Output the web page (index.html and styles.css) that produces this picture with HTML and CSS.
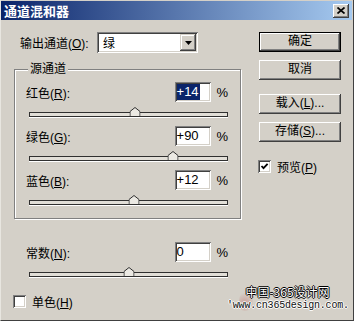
FILE: index.html
```html
<!DOCTYPE html>
<html lang="zh-CN">
<head>
    <meta charset="UTF-8">
    <title>通道混和器</title>
    <link rel="stylesheet" href="styles.css">
</head>
<body>
    <div class="window">
        <div class="titlebar">
            <span class="title">通道混和器</span>
            <span class="close">
                <svg width="8" height="7" viewBox="0 0 8 7"><path d="M0.5 0.5L7.5 6.5M7.5 0.5L0.5 6.5" stroke="#000" stroke-width="1.7"/></svg>
            </span>
        </div>

        <div class="content">
            <div class="main">
                <div class="output-row">
                    <label>输出通道(<u>O</u>):</label>
                    <div class="select">
                        <span>绿</span>
                        <span class="select-arrow">
                            <svg width="7" height="4" viewBox="0 0 7 4"><path d="M0 0H7L3.5 4Z" fill="#000"/></svg>
                        </span>
                    </div>
                </div>

                <div class="group">
                    <div class="group-title">源通道</div>

                    <div class="channel">
                        <div class="channel-row">
                            <label>红色(<u>R</u>):</label>
                            <div class="num"><span class="sel">+14</span></div>
                            <span class="pct">%</span>
                        </div>
                        <div class="track">
                            <svg class="thumb" style="left: 53.5%" width="11" height="10" viewBox="0 0 11 10"><path d="M0.5 9.5V4.5L5.5 0.5L10.5 4.5V9.5Z" fill="#ebe9e3" stroke="#303030"/></svg>
                        </div>
                    </div>

                    <div class="channel">
                        <div class="channel-row">
                            <label>绿色(<u>G</u>):</label>
                            <div class="num">+90</div>
                            <span class="pct">%</span>
                        </div>
                        <div class="track">
                            <svg class="thumb" style="left: 72.5%" width="11" height="10" viewBox="0 0 11 10"><path d="M0.5 9.5V4.5L5.5 0.5L10.5 4.5V9.5Z" fill="#ebe9e3" stroke="#303030"/></svg>
                        </div>
                    </div>

                    <div class="channel">
                        <div class="channel-row">
                            <label>蓝色(<u>B</u>):</label>
                            <div class="num">+12</div>
                            <span class="pct">%</span>
                        </div>
                        <div class="track">
                            <svg class="thumb" style="left: 53%" width="11" height="10" viewBox="0 0 11 10"><path d="M0.5 9.5V4.5L5.5 0.5L10.5 4.5V9.5Z" fill="#ebe9e3" stroke="#303030"/></svg>
                        </div>
                    </div>
                </div>

                <div class="channel const">
                    <div class="channel-row">
                        <label>常数(<u>N</u>):</label>
                        <div class="num">0</div>
                        <span class="pct">%</span>
                    </div>
                    <div class="track">
                        <svg class="thumb" style="left: 50%" width="11" height="10" viewBox="0 0 11 10"><path d="M0.5 9.5V4.5L5.5 0.5L10.5 4.5V9.5Z" fill="#ebe9e3" stroke="#303030"/></svg>
                    </div>
                </div>

                <div class="check mono">
                    <span class="box"></span>
                    <span>单色(<u>H</u>)</span>
                </div>
            </div>

            <div class="side">
                <div class="btn default">确定</div>
                <div class="btn">取消</div>
                <div class="btn spaced">载入(<u>L</u>)...</div>
                <div class="btn">存储(<u>S</u>)...</div>
                <div class="check preview">
                    <span class="box">
                        <svg width="9" height="9" viewBox="0 0 9 9"><path d="M1.5 4L3.5 6.2L7.6 1.8" fill="none" stroke="#000" stroke-width="1.8"/></svg>
                    </span>
                    <span>预览(<u>P</u>)</span>
                </div>
            </div>
        </div>

        <div class="watermark">
            <span class="wm-logo"></span>
            <div class="wm-cn">中国-365设计网</div>
            <div class="wm-url">'www.cn365design.com.</div>
        </div>
    </div>
</body>
</html>
```

FILE: styles.css
```css
body {
    margin: 0;
    font-family: 'Liberation Sans', 'Noto Sans CJK SC', sans-serif;
    font-size: 12px;
    color: #000;
}

.window {
    position: relative;
    width: 354px;
    height: 321px;
    box-sizing: border-box;
    background-color: #d4d0c8;
    border-left: 1px solid #e8e6e0;
    border-right: 1px solid #404040;
    border-bottom: 1px solid #404040;
    overflow: hidden;
}

.titlebar {
    height: 19px;
    margin: 1px 1px 0 0;
    padding: 0 3px;
    display: flex;
    align-items: center;
    justify-content: space-between;
    background: linear-gradient(to right, #0a246a, #a6caf0);
}

.title {
    color: #fff;
    font-family: 'Noto Sans CJK SC', sans-serif;
    font-weight: bold;
    font-size: 13px;
    line-height: 19px;
}

.close {
    width: 16px;
    height: 14px;
    box-sizing: border-box;
    background-color: #d4d0c8;
    box-shadow: inset -1px -1px #404040, inset 1px 1px #fff, inset -2px -2px #808080;
    display: flex;
    align-items: center;
    justify-content: center;
    padding-bottom: 1px;
}

.content {
    display: flex;
    padding: 12px 0 0 13px;
}

.main {
    width: 227px;
}

.output-row {
    display: flex;
    align-items: center;
    height: 21px;
    padding-left: 6px;
}

.output-row label {
    width: 77px;
}

.select {
    width: 101px;
    height: 21px;
    box-sizing: border-box;
    padding: 2px 2px 2px 6px;
    background-color: #fff;
    display: flex;
    align-items: center;
    justify-content: space-between;
    box-shadow: inset 1px 1px #808080, inset -1px -1px #fff, inset 2px 2px #404040, inset -2px -2px #d4d0c8;
}

.select-arrow {
    width: 16px;
    height: 17px;
    box-sizing: border-box;
    background-color: #d4d0c8;
    box-shadow: inset -1px -1px #404040, inset 1px 1px #d4d0c8, inset -2px -2px #808080, inset 2px 2px #fff;
    display: flex;
    align-items: center;
    justify-content: center;
}

.group {
    margin-top: 16px;
    border: 1px solid #808080;
    box-shadow: inset 1px 1px #fff, 1px 1px #fff;
    padding: 0 12px 13px 11px;
}

.group-title {
    display: table;
    margin: -8px 0 0 2px;
    padding: 0 2px;
    line-height: 14px;
    background-color: #d4d0c8;
}

.group-title + .channel {
    margin-top: 6px;
}

.channel + .channel {
    margin-top: 9px;
}

.channel-row {
    display: flex;
    align-items: center;
    height: 20px;
}

.channel-row label {
    width: 149px;
}

.num {
    width: 37px;
    height: 20px;
    box-sizing: border-box;
    padding: 2px 2px;
    background-color: #fff;
    font-size: 13px;
    line-height: 16px;
    box-shadow: inset 1px 1px #808080, inset -1px -1px #fff, inset 2px 2px #404040, inset -2px -2px #d4d0c8;
}

.sel {
    display: inline-block;
    background-color: #0a246a;
    color: #fff;
    padding-right: 1px;
}

.pct {
    margin-left: 5px;
    font-size: 13px;
}

.track {
    position: relative;
    height: 5px;
    margin: 10px 0 0 3px;
    box-sizing: border-box;
    border: 1px solid #303030;
    background-color: #e2dfd8;
    box-shadow: 0 1px 0 #fff;
}

.thumb {
    position: absolute;
    bottom: -1px;
    transform: translateX(-50%);
}

.const {
    margin-top: 23px;
    padding: 0 13px 0 12px;
}

.check {
    display: flex;
    align-items: center;
    gap: 6px;
}

.box {
    width: 13px;
    height: 13px;
    box-sizing: border-box;
    background-color: #fff;
    box-shadow: inset 1px 1px #808080, inset -1px -1px #fff, inset 2px 2px #404040, inset -2px -2px #d4d0c8;
    display: flex;
    align-items: center;
    justify-content: center;
}

.mono {
    margin: 16px 0 0 -1px;
}

.side {
    width: 82px;
    margin-left: 18px;
    display: flex;
    flex-direction: column;
}

.btn {
    height: 20px;
    box-sizing: border-box;
    background-color: #d4d0c8;
    text-align: center;
    line-height: 19px;
    box-shadow: inset -1px -1px #404040, inset 1px 1px #fff, inset -2px -2px #808080;
}

.btn + .btn {
    margin-top: 8px;
}

.btn.spaced {
    margin-top: 14px;
}

.btn.default {
    border: 1px solid #000;
    line-height: 17px;
}

.preview {
    margin: 16px 0 0 -1px;
}

.watermark {
    position: absolute;
    left: 226px;
    top: 283px;
    width: 121px;
    text-align: center;
}

.wm-logo {
    position: absolute;
    left: 12px;
    top: 8px;
    width: 14px;
    height: 20px;
    border-radius: 50% 40% 50% 40%;
    background: radial-gradient(circle at 40% 60%, rgba(196, 120, 116, 0.55), rgba(212, 208, 200, 0) 70%);
}

.wm-cn {
    position: relative;
    font-family: 'Noto Sans CJK SC', sans-serif;
    font-size: 12px;
    line-height: 17px;
    color: #fff;
    text-shadow: 1px 0 #000, -1px 0 #000, 0 1px #000, 0 -1px #000;
}

.wm-url {
    position: relative;
    font-family: 'Liberation Mono', monospace;
    font-size: 10px;
    line-height: 11px;
    letter-spacing: -0.2px;
    color: #111;
    text-shadow: 1px 0 #fff, -1px 0 #fff, 0 1px #fff, 0 -1px #fff;
}
```
